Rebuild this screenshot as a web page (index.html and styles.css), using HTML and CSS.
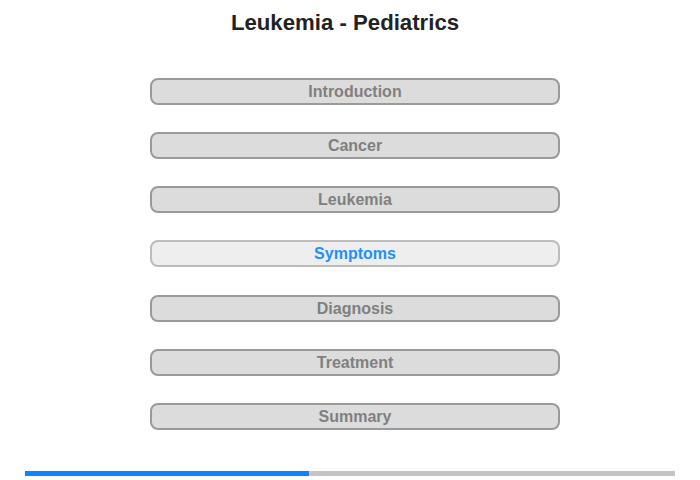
FILE: index.html
```html
<!DOCTYPE html>
<html>
<head>
<meta charset="utf-8">
<link rel="stylesheet" href="styles.css">
</head>
<body>
<div class="page">
  <h1 class="title">Leukemia - Pediatrics</h1>
  <nav class="menu">
    <div class="item">Introduction</div>
    <div class="item">Cancer</div>
    <div class="item">Leukemia</div>
    <div class="item active">Symptoms</div>
    <div class="item">Diagnosis</div>
    <div class="item">Treatment</div>
    <div class="item">Summary</div>
  </nav>
  <div class="progress"><div class="progress-fill" style="width:43.7%"></div></div>
</div>
</body>
</html>
```
FILE: styles.css
```css
html, body {
  margin: 0;
  padding: 0;
  background: #ffffff;
}
.page {
  width: 700px;
  height: 480px;
  font-family: "Liberation Sans", Arial, sans-serif;
  display: flex;
  flex-direction: column;
}
.title {
  margin: 0;
  padding: 10px 10px 0 0;
  font-size: 22.2px;
  line-height: 25px;
  font-weight: bold;
  color: #222222;
  text-align: center;
}
.menu {
  margin: 43px 0 0 150px;
  width: 410px;
  display: flex;
  flex-direction: column;
  gap: 27.17px;
}
.item {
  box-sizing: border-box;
  height: 27px;
  border: 2px solid #9a9a9a;
  border-radius: 8px;
  background: #dcdcdc;
  color: #808080;
  font-size: 16px;
  font-weight: bold;
  line-height: 23px;
  text-align: center;
}
.item.active {
  background: #eeeeee;
  border-color: #bcbcbc;
  color: #1e90ff;
}
.progress {
  margin: 41px 0 0 25px;
  width: 650px;
  height: 5px;
  background: #c4c4c4;
}
.progress-fill {
  height: 100%;
  background: #0a84ff;
}
```
